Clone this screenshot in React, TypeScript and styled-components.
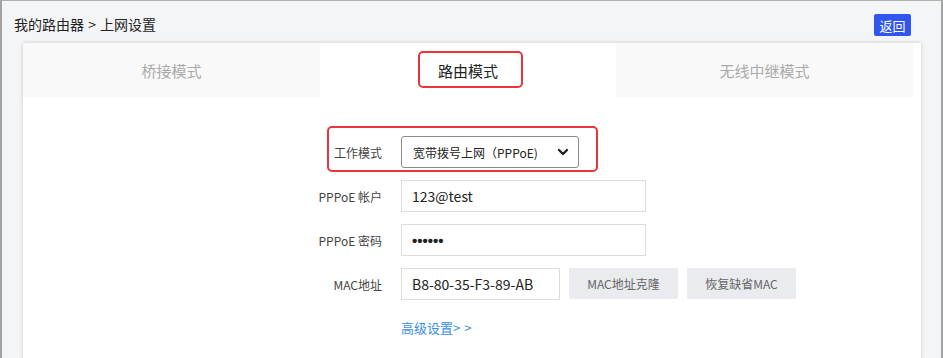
import * as React from 'react'
import styled, { createGlobalStyle } from 'styled-components'

const GlobalStyle = createGlobalStyle`
    html, body {
        margin: 0;
        padding: 0;
        background: #ffffff;
    }
    body {
        font-family: "Noto Sans CJK SC", "Noto Sans", sans-serif;
        color: #333333;
    }
`

let Frame = styled.div`
    width: 943px;
    height: 358px;
    box-sizing: border-box;
    border-left: 2px solid #a3a3a3;
    border-top: 1px solid #b0b0b0;
    border-right: 2px solid #a3a3a3;
    background: #f4f5f7;
    overflow: hidden;
    display: flex;
    flex-direction: column;
`

let Header = styled.div`
    height: 42px;
    box-sizing: border-box;
    display: flex;
    align-items: center;
    justify-content: space-between;
    padding: 6px 30px 0 12px;
`

let Crumb = styled.div`
    font-size: 14px;
    color: #222;
    margin-top: -2px;
    word-spacing: 1px;
`

let BackButton = styled.button`
    font-family: inherit;
    font-size: 13px;
    color: #fff;
    background: #3155f0;
    border: none;
    border-radius: 2px;
    width: 37px;
    height: 22px;
    padding: 0;
`

let Card = styled.div`
    margin: 0 20px 0 21px;
    flex: 1;
    background: #fff;
    box-shadow: 0 0 4px rgba(0, 0, 0, 0.18);
`

let Tabs = styled.div`
    width: 890px;
    display: grid;
    grid-template-columns: 297px 296px 297px;
    height: 54px;
`

let Tab = styled.div<{ $active?: boolean }>`
    position: relative;
    display: flex;
    align-items: center;
    justify-content: center;
    font-size: 15px;
    color: ${p => (p.$active ? '#222' : '#aaaaaa')};
    background: ${p => (p.$active ? '#ffffff' : '#f9f9fa')};
`

let Mark = styled.div`
    position: absolute;
    border: 2px solid #e8343a;
    border-radius: 5px;
    box-sizing: border-box;
    pointer-events: none;
`

let TabMark = styled(Mark)`
    left: 98px;
    top: 8px;
    width: 105px;
    height: 37px;
`

let RowMark = styled(Mark)`
    left: 25px;
    top: -10px;
    width: 271px;
    height: 46px;
`

let Form = styled.div`
    padding: 39px 0 0 279px;
    display: flex;
    flex-direction: column;
    gap: 12px;
`

let Row = styled.div`
    position: relative;
    display: grid;
    grid-template-columns: 80px auto;
    column-gap: 19px;
    align-items: center;
    height: 32px;
`

let Label = styled.div`
    font-size: 12px;
    color: #444;
    text-align: right;
`

let Controls = styled.div`
    display: flex;
    align-items: center;
    gap: 9px;
`

let Select = styled.div`
    width: 178px;
    height: 32px;
    box-sizing: border-box;
    border: 1px solid #8c8c8c;
    border-radius: 3px;
    display: flex;
    align-items: center;
    justify-content: space-between;
    padding: 0 8px 0 11px;
    font-size: 12px;
    color: #222;
`

let Field = styled.div<{ $w: number }>`
    width: ${p => p.$w}px;
    height: 32px;
    box-sizing: border-box;
    border: 1px solid #dcdcdc;
    display: flex;
    align-items: center;
    padding-left: 10px;
    font-size: 14px;
    color: #222;
`

let Dots = styled.span`
    font-family: "Liberation Sans", Arial, sans-serif;
    font-size: 15px;
    font-weight: bold;
`

let GrayButton = styled.div`
    width: 109px;
    height: 31px;
    background: #e9ebef;
    border-radius: 2px;
    display: flex;
    align-items: center;
    justify-content: center;
    font-size: 12px;
    color: #666;
    margin-top: -1px;
`

let MoreLink = styled.a`
    margin: 6px 0 0 99px;
    font-size: 13px;
    color: #3a8ee6;
    text-decoration: none;
    word-spacing: 1px;
`

const Chevron = () => (
    <svg width="14" height="14" viewBox="0 0 14 14">
        <path d="M3 5 L7 9 L11 5" fill="none" stroke="#222" strokeWidth="2.4" strokeLinecap="round" strokeLinejoin="round" />
    </svg>
)

export default function App() {
    return (
        <>
            <GlobalStyle />
            <Frame>
                <Header>
                    <Crumb>我的路由器 &gt; 上网设置</Crumb>
                    <BackButton>返回</BackButton>
                </Header>
                <Card>
                    <Tabs>
                        <Tab>桥接模式</Tab>
                        <Tab $active>
                            路由模式
                            <TabMark />
                        </Tab>
                        <Tab>无线中继模式</Tab>
                    </Tabs>
                    <Form>
                        <Row>
                            <Label>工作模式</Label>
                            <Controls>
                                <Select>
                                    <span>宽带拨号上网（PPPoE)</span>
                                    <Chevron />
                                </Select>
                            </Controls>
                            <RowMark />
                        </Row>
                        <Row>
                            <Label>PPPoE 帐户</Label>
                            <Controls>
                                <Field $w={245}>123@test</Field>
                            </Controls>
                        </Row>
                        <Row>
                            <Label>PPPoE 密码</Label>
                            <Controls>
                                <Field $w={245}><Dots>••••••</Dots></Field>
                            </Controls>
                        </Row>
                        <Row>
                            <Label>MAC地址</Label>
                            <Controls>
                                <Field $w={159}>B8-80-35-F3-89-AB</Field>
                                <GrayButton>MAC地址克隆</GrayButton>
                                <GrayButton>恢复缺省MAC</GrayButton>
                            </Controls>
                        </Row>
                        <MoreLink href="#">高级设置&gt; &gt;</MoreLink>
                    </Form>
                </Card>
            </Frame>
        </>
    )
}
